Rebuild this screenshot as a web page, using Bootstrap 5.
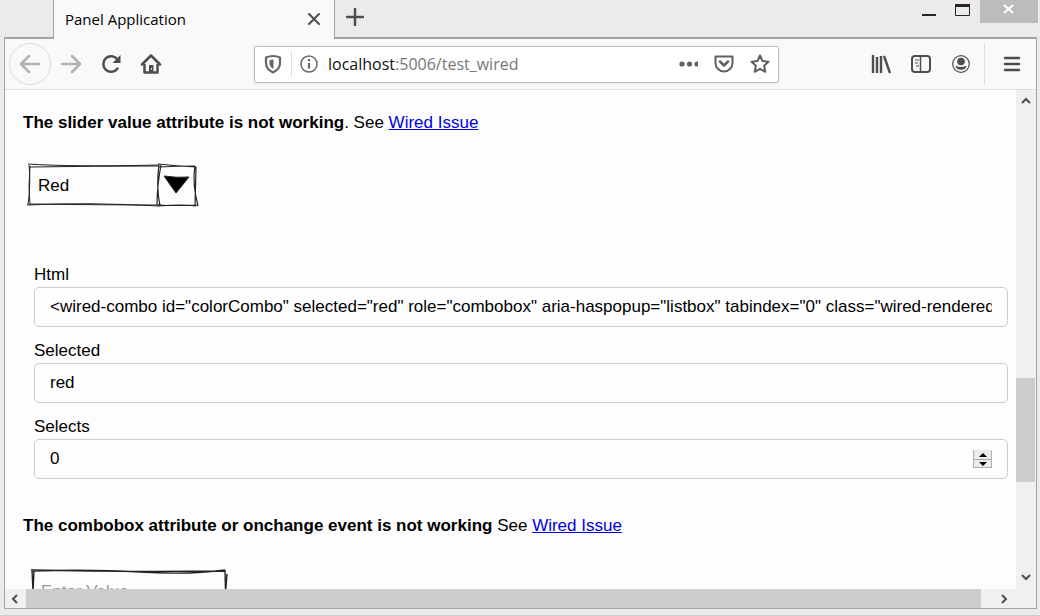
<!DOCTYPE html>
<html lang="en">
<head>
<meta charset="utf-8">
<meta name="viewport" content="width=device-width, initial-scale=1">
<title>Panel Application</title>
<link href="https://cdn.jsdelivr.net/npm/bootstrap@5.3.0/dist/css/bootstrap.min.css" rel="stylesheet">
<style>
  body { background: #ebebeb; color: #000; font: 17px/24px "Liberation Sans", Arial, sans-serif; border-bottom: 1px solid #ccc; }
  button { border: 0; background: none; padding: 0; color: #4e4e4e; }
  svg { display: block; fill: none; stroke: currentColor; stroke-width: 2; }
  .ui-font { font-family: "Open Sans", "Segoe UI", sans-serif; }

  .tab-strip { height: 37px; padding-left: 53px; }
  .page-tab { width: 282px; height: 39px; background: #f9f9f9; border: 1px solid #a3a3a3; border-top: 0; border-bottom: 0; padding: 0 13px 1px 11px; font-size: 15px; z-index: 1; }
  .new-tab { margin: 0 0 4px 11px; }
  .win-btn { width: 34px; height: 23px; color: #2d2420; }
  .win-close { width: 58px; background: #bcbcbc; color: #fff; margin-right: 2px; }

  .frame { margin: 0 3px 6px 4px; border: 1px solid #a3a3a3; border-top-width: 2px; }
  .toolbar { height: 51px; background: #f9f9f9; border-bottom: 1px solid #dedede; padding: 0 14px 0 4px; }
  .back-btn { width: 42px; height: 42px; border: 1px solid #dcdcdc; border-radius: 50%; }
  .faded { color: #b1b1b1; }
  .nav-set { gap: 18px; width: 245px; }
  .nav-set .fwd { margin-left: -9px; }
  .url-box { width: 525px; height: 37px; background: #fff; border: 1px solid #bbb; border-radius: 2px; padding: 0 8px; box-shadow: 0 1px 4px #0000000d; color: #666; }
  .url-box button { color: #606060; }
  .url-rule { width: 1px; height: 26px; background: #dedede; margin: 0 7px 0 8px; }
  .url-text { font-size: 16px; color: #777; margin-left: 9px; }
  .url-text b { font-weight: 400; color: #111; }
  .tools { gap: 20px; }
  .menu-rule { width: 1px; height: 42px; background: #dedede; margin: 0 -3px 0 -7px; }

  .view { background: #fdfdfd; padding: 21px 8px 0 18px; min-height: 0; }
  .view a { color: #0000e0; text-decoration: underline; }
  .combo { width: 172px; height: 46px; margin: 28px 0 0 4px; }
  .combo svg, .sketch-entry svg { position: absolute; inset: 0; color: #222; pointer-events: none; stroke-width: 1; }
  .combo select { appearance: none; border: 0; background: none; padding: 0 0 0 11px; color: #000; }
  .fields { margin: 54px 0 0 11px; }
  .fields label { margin-bottom: 0; }
  .field { height: 40px; border: 1px solid #ccc; border-radius: 5px; background: #fefefe; padding: 0 15px; }
  .field + label { margin-top: 12px; }
  .field input { border: 0; outline: 0; background: none; padding: 0; color: #000; height: 36px; appearance: textfield; }
  .field input::-webkit-inner-spin-button { display: none; }
  .spinner { width: 19px; height: 18px; border: 1px solid #b0aeab; border-top-color: #e8e8e8; background: #ececec; flex: none; }
  .spinner button { display: block; width: 17px; height: 8px; color: #000; }
  .spinner button + button { border-top: 1px solid #aaa8a2; }
  .spinner svg { margin: auto; fill: #000; stroke: none; }
  .second-note { margin: 35px 0 0; }
  .sketch-entry { width: 200px; height: 46px; margin: 30px 0 0 7px; }
  .sketch-entry input { border: 0; background: none; padding: 0 0 0 11px; height: 48px; }
  .sketch-entry input::placeholder { color: #9a9a9a; }

  .bar-v { width: 20px; background: #f0f0f0; color: #555; flex: none; }
  .bar-v .track-top { flex: 269 0 0; }
  .bar-v .thumb { flex: 104 0 0; background: #cdcdcd; margin-right: 1px; }
  .bar-v .track-end { flex: 83 0 0; }
  .bar-v button { height: 21px; display: grid; place-items: center; padding-right: 1px; }
  .bar-v .track-end + button { height: 25px; }
  .bar-h { height: 19px; background: #f0f0f0; flex: none; }
  .bar-h button { width: 19px; display: grid; place-items: center; }
  .bar-h .track-end + button { width: 25px; }
  .bar-h .thumb { flex: 955 0 0; background: #cdcdcd; margin-left: 2px; }
  .bar-h .track-end { flex: 10 0 0; }
</style>
</head>
<body class="d-flex flex-column vh-100 overflow-hidden">

<header class="tab-strip d-flex flex-shrink-0">
  <div class="page-tab ui-font position-relative d-flex align-items-center justify-content-between">
    <span>Panel Application</span>
    <button type="button" aria-label="Close tab"><svg width="14" height="14" viewBox="0 0 14 14"><path d="M2 2l10 10M12 2L2 12" stroke-linecap="round"/></svg></button>
  </div>
  <button class="new-tab" type="button" aria-label="New tab"><svg width="18" height="18" viewBox="0 0 18 18"><path d="M9 1v16M1 9h16" stroke-width="2.500" stroke-linecap="round"/></svg></button>
  <div class="d-flex ms-auto align-items-start">
    <button class="win-btn" type="button" aria-label="Minimize"><svg width="34" height="23"><path d="M10 15h14"/></svg></button>
    <button class="win-btn" type="button" aria-label="Maximize"><svg width="34" height="23"><path d="M9.500 5v10.500h14V5" stroke-width="1"/><path d="M9 5.500h15" stroke-width="3"/></svg></button>
    <button class="win-btn win-close" type="button" aria-label="Close"><svg width="58" height="23"><path d="M24 5l9 8M33 5l-9 8"/></svg></button>
  </div>
</header>

<div class="frame d-flex flex-column flex-grow-1 overflow-hidden">
  <nav class="toolbar d-flex align-items-center flex-shrink-0" aria-label="Browser">
    <div class="nav-set d-flex align-items-center flex-shrink-0">
      <button class="back-btn faded d-grid justify-content-center align-content-center" type="button" aria-label="Back"><svg width="22" height="20" viewBox="0 0 22 20"><path d="M20 10H2M10 2L2 10l8 8" stroke-width="2.500" stroke-linecap="round" stroke-linejoin="round"/></svg></button>
      <button class="fwd faded" type="button" aria-label="Forward"><svg width="22" height="20" viewBox="0 0 22 20"><path d="M2 10h18M12 2l8 8-8 8" stroke-width="2.500" stroke-linecap="round" stroke-linejoin="round"/></svg></button>
      <button type="button" aria-label="Reload"><svg width="22" height="22" viewBox="0 0 22 22"><path d="M17.500 15.500A7.800 7.800 0 1 1 17.500 6.500" stroke-width="2.500" stroke-linecap="round"/><path d="M20.500 2v8h-8z" fill="currentColor" stroke="none"/></svg></button>
      <button type="button" aria-label="Home"><svg width="22" height="22" viewBox="0 0 22 22"><path d="M2 11.500L11 2.500l9 9" stroke-width="2.500" stroke-linecap="round" stroke-linejoin="round"/><path d="M4.500 11v8.500h13V11" stroke-width="2.500" stroke-linejoin="round"/><path d="M9 19v-7h4.500v7" fill="currentColor" stroke="none"/><path d="M11.500 15v1.500" stroke="#fff" stroke-width="1"/></svg></button>
    </div>
    <div class="url-box d-flex align-items-center flex-shrink-1">
      <svg width="20" height="20" viewBox="0 0 20 20" role="img" aria-label="Tracking protection"><path d="M10 2Q13.500 2 17 3.500V9q0 6-7 9.500Q3 15 3 9V3.500Q6.500 2 10 2z" stroke-width="2.200" stroke-linejoin="round"/><path d="M10.500 5.500q-2 0-4 .8V9q0 4 4 6z" fill="currentColor" stroke="none"/></svg>
      <span class="url-rule"></span>
      <svg width="20" height="20" viewBox="0 0 20 20" role="img" aria-label="Site information"><circle cx="10" cy="10" r="8" stroke-width="1.500"/><path d="M10 9v5.500M10 5v2.200" stroke-width="2.200"/></svg>
      <span class="url-text ui-font flex-grow-1"><b>localhost</b>:5006/test_wired</span>
      <div class="d-flex align-items-center gap-3">
        <button type="button" aria-label="Page actions"><svg width="24" height="20"><g fill="#606060" stroke="none"><circle cx="8" cy="10" r="2.600"/><circle cx="15.500" cy="10" r="2.600"/><circle cx="23" cy="10" r="2.600"/></g></svg></button>
        <button type="button" aria-label="Save to Pocket"><svg width="20" height="20" viewBox="0 0 20 20"><path d="M1.500 2.500h17V9a8.500 8.500 0 0 1-17 0z" stroke-linejoin="round"/><path d="M6 7.500l4 4 4-4" stroke-width="2.500" stroke-linecap="round" stroke-linejoin="round"/></svg></button>
        <button type="button" aria-label="Bookmark"><svg width="20" height="20" viewBox="0 0 20 20"><path d="M10 1.500l2.500 5.500 6 .7-4.400 4.100 1.200 6L10 14.800l-5.300 3 1.200-6L1.500 7.700l6-.7z" stroke-linejoin="round"/></svg></button>
      </div>
    </div>
    <div class="tools d-flex align-items-center ms-auto">
      <button type="button" aria-label="Library"><svg width="20" height="20" viewBox="0 0 20 20"><path d="M2 1v18M6 3v16M10 2v17M13 2l6 17" stroke-width="2.400"/></svg></button>
      <button type="button" aria-label="Sidebars"><svg width="20" height="18" viewBox="0 0 20 18"><rect x="1" y="1" width="18" height="16" rx="3"/><path d="M9.500 1v16" stroke-width="1.500"/><path d="M4 5h4M4 8h3M5 11h3" stroke-width="1"/></svg></button>
      <button type="button" aria-label="Account"><svg width="20" height="20" viewBox="0 0 20 20"><circle cx="10" cy="10" r="8.300" stroke-width="1.200"/><circle cx="10" cy="7.500" r="3.800" fill="currentColor" stroke="none"/><path d="M4.500 11.500q5.500 3 11 0-.5 4.300-5.500 4.300t-5.500-4.300z" fill="currentColor" stroke="none"/></svg></button>
      <span class="menu-rule"></span>
      <button type="button" aria-label="Menu"><svg width="20" height="20"><path d="M3 4h14M3 10h14M3 16h14" stroke-width="2.400" stroke-linecap="round"/></svg></button>
    </div>
  </nav>

  <div class="d-flex flex-grow-1 overflow-hidden">
    <div class="d-flex flex-column flex-grow-1 overflow-hidden">
      <main class="view flex-grow-1 overflow-hidden">
        <p class="m-0"><strong>The slider value attribute is not working</strong>. See <a href="#">Wired Issue</a></p>

        <div class="combo position-relative">
          <select class="w-100 h-100" aria-label="Color"><option>Red</option><option>Green</option><option>Blue</option></select>
          <svg width="172" height="46" viewBox="0 0 172 46">
            <path d="M1 1Q45 4 132 2M3 4Q70 3 132 3M2 2Q4 20 1 42M3 3Q1 24 3 42M0 42Q60 39 132 43M3 41Q80 42 134 42"/>
            <path d="M131 1Q150 3 169 4M132 4Q150 3 168 3M132 1Q129 24 133 43M134 2Q130 23 130 42M168 3Q165 20 171 43M169 4L168 43M131 42Q150 43 171 42M132 43Q155 41 169 43" stroke-width="1.200"/>
            <path d="M137 13q13 2 25 1L149 30z" fill="#000"/>
          </svg>
        </div>

        <form class="fields">
          <label class="d-block" for="html">Html</label>
          <div class="field d-flex align-items-center"><input class="w-100" id="html" type="text" value='&lt;wired-combo id="colorCombo" selected="red" role="combobox" aria-haspopup="listbox" tabindex="0" class="wired-rendered" aria-expanded="false"&gt;'></div>
          <label class="d-block" for="selected">Selected</label>
          <div class="field d-flex align-items-center"><input class="w-100" id="selected" type="text" value="red"></div>
          <label class="d-block" for="selects">Selects</label>
          <div class="field d-flex align-items-center">
            <input class="flex-grow-1" id="selects" type="number" value="0">
            <div class="spinner">
              <button type="button" aria-label="Increase"><svg width="8" height="4" viewBox="0 0 8 4"><path d="M4 0l4 4H0z"/></svg></button>
              <button type="button" aria-label="Decrease"><svg width="8" height="4" viewBox="0 0 8 4"><path d="M0 0h8L4 4z"/></svg></button>
            </div>
          </div>
        </form>

        <p class="second-note"><strong>The combobox attribute or onchange event is not working</strong> See <a href="#">Wired Issue</a></p>

        <div class="sketch-entry position-relative">
          <input class="w-100" type="text" placeholder="Enter Value" aria-label="Value">
          <svg width="200" height="46" viewBox="0 0 200 46"><path d="M1 2Q90 4 195 3M2 3Q60 1 110 4T195 2M2 2L4 44M4 3L2 44M195 2L196 44M197 6L194 44" stroke-width="1.400"/></svg>
        </div>
      </main>
      <div class="bar-h d-flex">
        <button type="button" aria-label="Scroll left"><svg width="8" height="12"><path d="M6 2L2 6l4 4"/></svg></button>
        <div class="thumb"></div><div class="track-end"></div>
        <button type="button" aria-label="Scroll right"><svg width="8" height="12"><path d="M2 2l4 4-4 4"/></svg></button>
      </div>
    </div>
    <div class="bar-v d-flex flex-column">
      <button type="button" aria-label="Scroll up"><svg width="12" height="8"><path d="M2 6l4-4 4 4"/></svg></button>
      <div class="track-top"></div><div class="thumb"></div><div class="track-end"></div>
      <button type="button" aria-label="Scroll down"><svg width="12" height="8"><path d="M2 2l4 4 4-4"/></svg></button>
      <div class="bar-h"></div>
    </div>
  </div>
</div>

<script src="https://cdn.jsdelivr.net/npm/bootstrap@5.3.0/dist/js/bootstrap.bundle.min.js"></script>
</body>
</html>
